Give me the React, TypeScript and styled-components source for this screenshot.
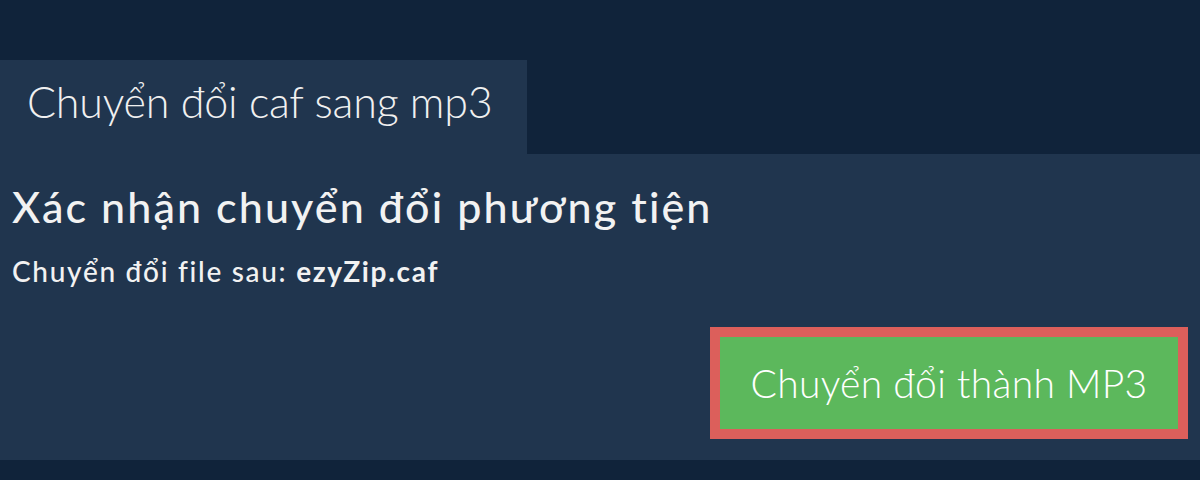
import React from "react";
import styled, { createGlobalStyle } from "styled-components";

const GlobalStyle = createGlobalStyle`
  html, body {
    margin: 0;
    padding: 0;
    background: #10233a;
    font-family: Lato, "Noto Sans", sans-serif;
    color: #f2f2f2;
  }
`;

const Page = styled.div`
  width: 1200px;
  height: 480px;
  padding-top: 60px;
  box-sizing: border-box;
  background: #10233a;
`;

const Tabs = styled.div`
  display: flex;
`;

const Tab = styled.div`
  width: 527px;
  height: 94px;
  box-sizing: border-box;
  padding: 16px 0 0 27px;
  background: #20354e;
  font-size: 43px;
  line-height: 1.2;
  font-weight: 300;
  letter-spacing: -0.2px;
  color: #f0f0f0;
  white-space: nowrap;
`;

const Panel = styled.div`
  background: #20354e;
  height: 306px;
  box-sizing: border-box;
  padding: 27px 12px 0 12px;
  display: flex;
  flex-direction: column;
`;

const Heading = styled.h1`
  margin: 0;
  font-size: 43px;
  font-weight: 500;
  line-height: 51px;
  letter-spacing: 2.1px;
  color: #f2f2f2;
  white-space: nowrap;
`;

const FileLine = styled.p`
  margin: 23px 0 0 0;
  font-size: 28px;
  line-height: 33px;
  font-weight: 500;
  letter-spacing: 1.7px;
  color: #f2f2f2;
  white-space: nowrap;
`;

const FileName = styled.strong`
  font-weight: 700;
`;

const Actions = styled.div`
  display: flex;
  justify-content: flex-end;
  margin-top: 39px;
`;

const ConvertButton = styled.button<{ $accent: string }>`
  width: 478px;
  height: 112px;
  box-sizing: border-box;
  border: 10px solid ${(p) => p.$accent};
  background: #5cb85c;
  color: #ffffff;
  font-family: Lato, "Noto Sans", sans-serif;
  font-size: 39px;
  font-weight: 300;
  letter-spacing: 0.3px;
  cursor: pointer;
  padding: 0;
`;

export default function App() {
  return (
    <>
      <GlobalStyle />
      <Page>
        <Tabs>
          <Tab>Chuyển đổi caf sang mp3</Tab>
        </Tabs>
        <Panel>
          <Heading>Xác nhận chuyển đổi phương tiện</Heading>
          <FileLine>
            Chuyển đổi file sau: <FileName>ezyZip.caf</FileName>
          </FileLine>
          <Actions>
            <ConvertButton $accent="#dc5f5b">Chuyển đổi thành MP3</ConvertButton>
          </Actions>
        </Panel>
      </Page>
    </>
  );
}
